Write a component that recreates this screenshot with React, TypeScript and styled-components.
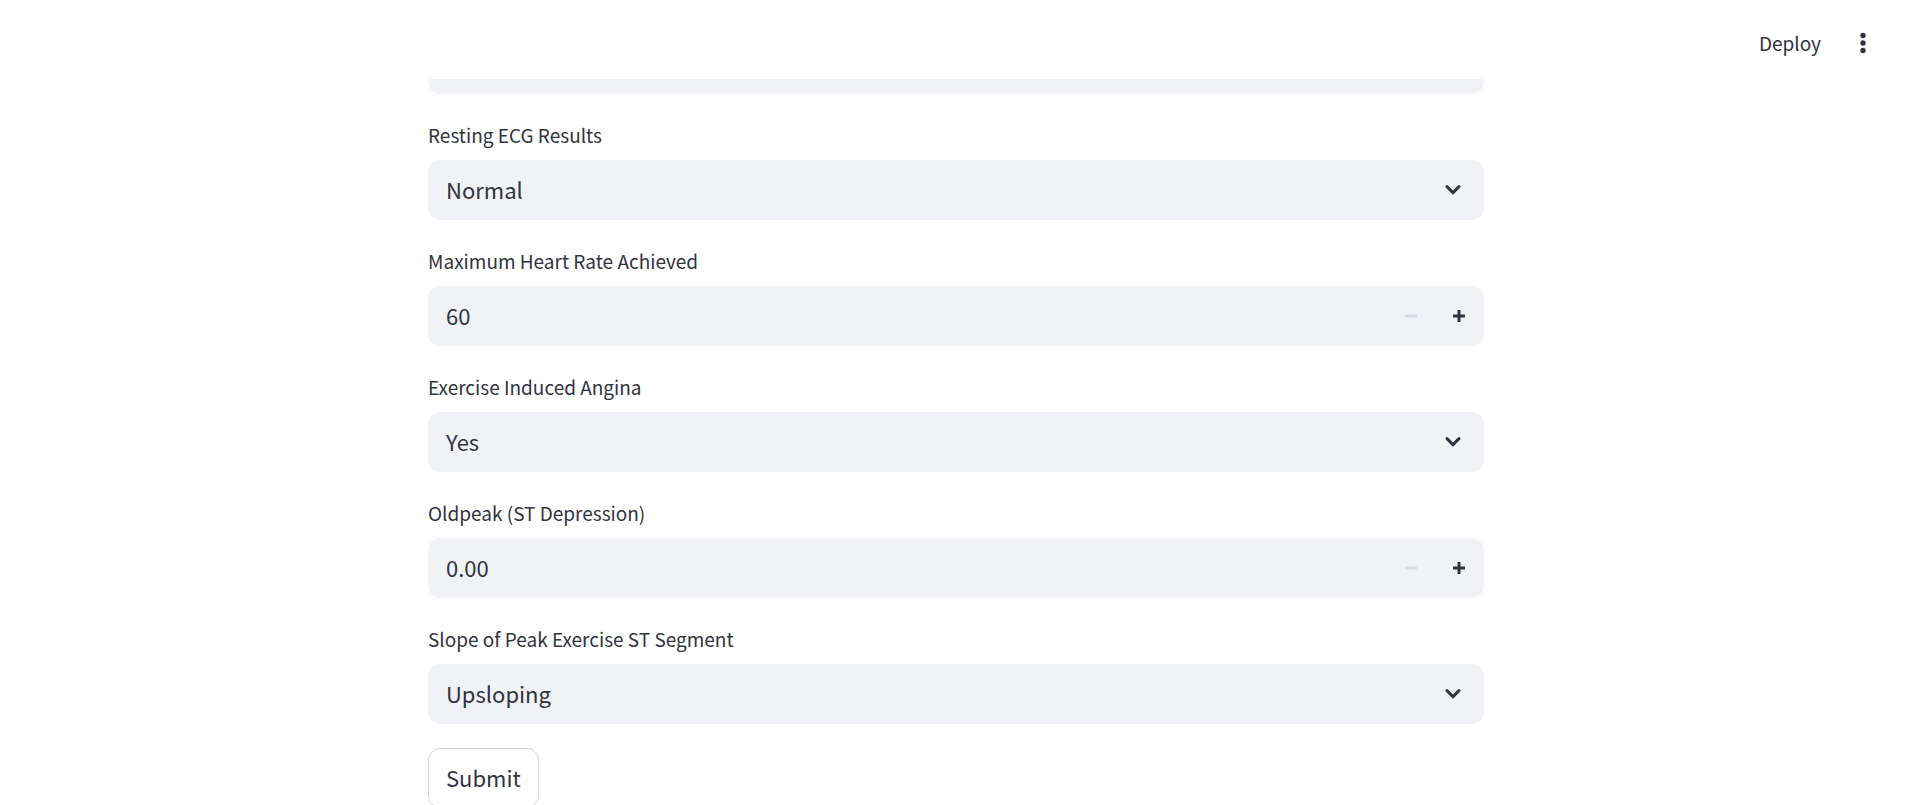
import React, { useId, useState } from "react";
import styled, { createGlobalStyle } from "styled-components";

const colors = {
  text: "#31333f",
  field: "#f0f2f6",
  border: "#d6d6d9",
  disabled: "#d5dae5",
};

const GlobalStyle = createGlobalStyle`
  *, *::before, *::after { box-sizing: border-box; }
  body {
    margin: 0;
    background: #fff;
    color: ${colors.text};
    font-family: "Source Sans Pro", "Noto Sans CJK SC", sans-serif;
  }
  button, input, select { font: inherit; color: inherit; }
`;

const Page = styled.div`
  display: flex;
  flex-direction: column;
  height: 100vh;
`;

const Header = styled.header`
  display: flex;
  flex: none;
  align-items: center;
  justify-content: flex-end;
  gap: 24px;
  height: 79px;
  padding: 7px 37px 0 24px;
`;

const HeaderButton = styled.button`
  display: flex;
  align-items: center;
  justify-content: center;
  min-width: 36px;
  height: 36px;
  padding: 0;
  border: 0;
  background: transparent;
  font-size: 19px;
  line-height: 28px;
  cursor: pointer;
`;

const Main = styled.main`
  flex: 1;
  min-height: 0;
  overflow: hidden;
  padding-right: 6px;
`;

const Form = styled.form`
  display: flex;
  flex-direction: column;
  gap: 24px;
  width: 100%;
  max-width: 1056px;
  margin: -45px auto 0;
`;

const Field = styled.div`
  display: flex;
  flex-direction: column;
  gap: 8px;
`;

const Label = styled.label`
  font-size: 19px;
  line-height: 34px;
`;

const Control = styled.div`
  display: grid;
  grid-template-columns: 1fr;
  align-items: center;
  height: 60px;
  border-radius: 12px;
  background: ${colors.field};
  overflow: hidden;
`;

const Select = styled.select`
  grid-area: 1 / 1;
  width: 100%;
  height: 60px;
  padding: 0 60px 3px 18px;
  border: 0;
  outline: 0;
  appearance: none;
  background: transparent;
  font-size: 22px;
  cursor: pointer;
`;

const Chevron = styled.svg`
  grid-area: 1 / 1;
  justify-self: end;
  margin-right: 19px;
  pointer-events: none;
`;

const NumberControl = styled(Control)`
  grid-template-columns: 1fr 48px 48px;
  padding-right: 1px;
`;

const NumberInput = styled.input`
  width: 100%;
  height: 60px;
  padding: 0 18px 3px;
  border: 0;
  outline: 0;
  appearance: textfield;
  background: transparent;
  font-size: 22px;
  &::-webkit-inner-spin-button { appearance: none; margin: 0; }
`;

const StepButton = styled.button`
  display: flex;
  align-items: center;
  justify-content: center;
  height: 60px;
  padding: 0;
  border: 0;
  background: transparent;
  cursor: pointer;
  &:disabled { color: ${colors.disabled}; cursor: not-allowed; }
`;

const SubmitButton = styled.button`
  align-self: flex-start;
  height: 60px;
  padding: 0 17px 3px;
  border: 1px solid ${colors.border};
  border-radius: 12px;
  background: #fff;
  font-size: 22px;
  line-height: 36px;
  cursor: pointer;
`;

function SelectControl({ id, options, label }: { id?: string; options: string[]; label?: string }) {
  return (
    <Control>
      <Select id={id} aria-label={label}>
        {options.map((option) => (
          <option key={option}>{option}</option>
        ))}
      </Select>
      <Chevron width="24" height="24" viewBox="0 0 24 24" fill="none" aria-hidden="true">
        <path d="M6 8.6l6 6 6-6" stroke="currentColor" strokeWidth="3" strokeLinecap="round" />
      </Chevron>
    </Control>
  );
}

function SelectField({ label, options }: { label: string; options: string[] }) {
  const id = useId();
  return (
    <Field>
      <Label htmlFor={id}>{label}</Label>
      <SelectControl id={id} options={options} />
    </Field>
  );
}

interface NumberFieldProps {
  label: string;
  min: number;
  step: number;
  digits: number;
}

function NumberField({ label, min, step, digits }: NumberFieldProps) {
  const id = useId();
  const [value, setValue] = useState(min.toFixed(digits));
  const change = (delta: number) => setValue(Math.max(min, Number(value) + delta).toFixed(digits));
  return (
    <Field>
      <Label htmlFor={id}>{label}</Label>
      <NumberControl>
        <NumberInput
          id={id}
          type="number"
          min={min}
          step={step}
          value={value}
          onChange={(event) => setValue(event.target.value)}
        />
        <StepButton type="button" aria-label="Decrease" disabled={Number(value) <= min} onClick={() => change(-step)}>
          <svg width="12" height="12" viewBox="0 0 8 8" fill="currentColor" aria-hidden="true">
            <path d="M0 3v2h8V3z" />
          </svg>
        </StepButton>
        <StepButton type="button" aria-label="Increase" onClick={() => change(step)}>
          <svg width="12" height="12" viewBox="0 0 8 8" fill="currentColor" aria-hidden="true">
            <path d="M3 0v3H0v2h3v3h2V5h3V3H5V0z" />
          </svg>
        </StepButton>
      </NumberControl>
    </Field>
  );
}

export default function App() {
  return (
    <Page>
      <GlobalStyle />
      <Header>
        <HeaderButton type="button">Deploy</HeaderButton>
        <HeaderButton type="button" aria-label="Menu">
          <svg width="24" height="24" viewBox="0 0 24 24" fill="currentColor" aria-hidden="true">
            <circle cx="12" cy="4.5" r="2.7" />
            <circle cx="12" cy="12" r="2.7" />
            <circle cx="12" cy="19.5" r="2.7" />
          </svg>
        </HeaderButton>
      </Header>
      <Main>
        <Form onSubmit={(event) => event.preventDefault()}>
          <SelectControl label="Fasting blood sugar" options={[""]} />
          <SelectField label="Resting ECG Results" options={["Normal"]} />
          <NumberField label="Maximum Heart Rate Achieved" min={60} step={1} digits={0} />
          <SelectField label="Exercise Induced Angina" options={["Yes", "No"]} />
          <NumberField label="Oldpeak (ST Depression)" min={0} step={0.01} digits={2} />
          <SelectField label="Slope of Peak Exercise ST Segment" options={["Upsloping"]} />
          <SubmitButton type="submit">Submit</SubmitButton>
        </Form>
      </Main>
    </Page>
  );
}
